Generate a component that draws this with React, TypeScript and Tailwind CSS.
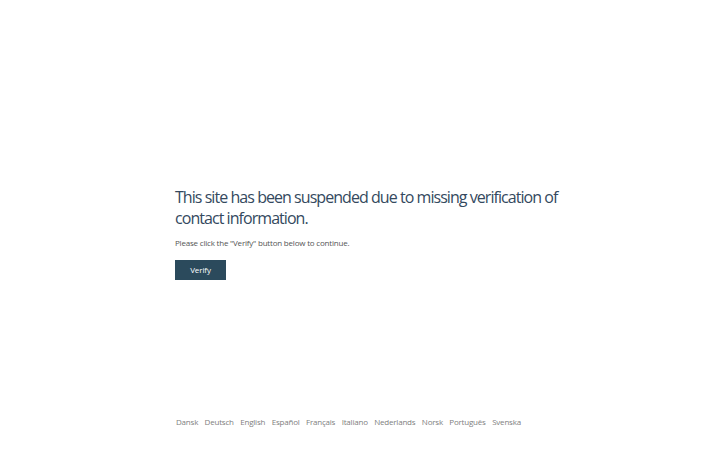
const languages = [
  "Dansk",
  "Deutsch",
  "English",
  "Español",
  "Français",
  "Italiano",
  "Nederlands",
  "Norsk",
  "Português",
  "Svenska",
];

export default function App() {
  return (
    <div
      className="flex h-[450px] w-[720px] flex-col bg-white"
      style={{ fontFamily: '"Open Sans", sans-serif' }}
    >
      <main className="pl-[175px] pt-[187px]">
        <div className="w-[390px]">
          <h1 className="text-[16px] leading-[21px] tracking-[-0.95px] text-[#34495e]">
            This site has been suspended due to missing verification of contact information.
          </h1>
          <p className="mt-[8px] text-[8px] leading-[12px] tracking-[-0.2px] text-[#555]">
            Please click the "Verify" button below to continue.
          </p>
          <button
            type="button"
            className="mt-[11px] h-[20px] w-[51px] bg-[#2b4a5c] text-[8px] tracking-[-0.1px] text-white"
          >
            Verify
          </button>
        </div>
      </main>
      <footer className="mt-auto flex gap-[6.4px] pb-[22px] pl-[176px] text-[8px] leading-[12px] tracking-[-0.2px] text-[#808080]">
        {languages.map((lang) => (
          <a key={lang} href="#">
            {lang}
          </a>
        ))}
      </footer>
    </div>
  );
}
